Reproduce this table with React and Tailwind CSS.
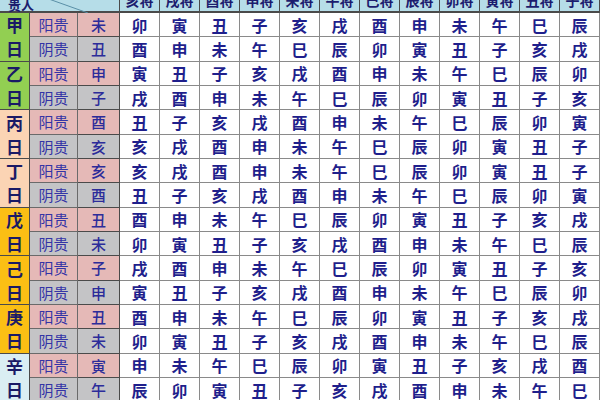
import React from 'react';

const generals = ['亥将', '戌将', '酉将', '申将', '未将', '午将', '巳将', '辰将', '卯将', '寅将', '丑将', '子将'];

const stemBg = {
  green: 'bg-[#92cf52]',
  peach: 'bg-[#fbd4b4]',
  orange: 'bg-[#fbbf14]',
  blue: 'bg-[#daeef3]',
};

const groups = [
  {
    stem: '甲', color: 'green', rows: [
      ['阳贵', '未', '卯寅丑子亥戌酉申未午巳辰'],
      ['阴贵', '丑', '酉申未午巳辰卯寅丑子亥戌'],
    ],
  },
  {
    stem: '乙', color: 'green', rows: [
      ['阳贵', '申', '寅丑子亥戌酉申未午巳辰卯'],
      ['阴贵', '子', '戌酉申未午巳辰卯寅丑子亥'],
    ],
  },
  {
    stem: '丙', color: 'peach', rows: [
      ['阳贵', '酉', '丑子亥戌酉申未午巳辰卯寅'],
      ['阴贵', '亥', '亥戌酉申未午巳辰卯寅丑子'],
    ],
  },
  {
    stem: '丁', color: 'peach', rows: [
      ['阳贵', '亥', '亥戌酉申未午巳辰卯寅丑子'],
      ['阴贵', '酉', '丑子亥戌酉申未午巳辰卯寅'],
    ],
  },
  {
    stem: '戊', color: 'orange', rows: [
      ['阳贵', '丑', '酉申未午巳辰卯寅丑子亥戌'],
      ['阴贵', '未', '卯寅丑子亥戌酉申未午巳辰'],
    ],
  },
  {
    stem: '己', color: 'orange', rows: [
      ['阳贵', '子', '戌酉申未午巳辰卯寅丑子亥'],
      ['阴贵', '申', '寅丑子亥戌酉申未午巳辰卯'],
    ],
  },
  {
    stem: '庚', color: 'orange', rows: [
      ['阳贵', '丑', '酉申未午巳辰卯寅丑子亥戌'],
      ['阴贵', '未', '卯寅丑子亥戌酉申未午巳辰'],
    ],
  },
  {
    stem: '辛', color: 'blue', rows: [
      ['阳贵', '寅', '申未午巳辰卯寅丑子亥戌酉'],
      ['阴贵', '午', '辰卯寅丑子亥戌酉申未午巳'],
    ],
  },
];

function App() {
  return (
    <div
      className="w-[600px] h-[400px] overflow-hidden bg-white"
      style={{ fontFamily: '"Noto Sans CJK SC", "Noto Sans", sans-serif' }}
    >
      <div className="-mt-[11px] grid grid-cols-[30px_48px_42px_repeat(12,40px)] grid-rows-[24px_repeat(16,24.33px)]">
        <div className="col-span-3 relative bg-[#b6dde8] border-b-2 border-r border-[#4a4a4a] flex items-center pl-[8px]">
          <span className="text-[13px] leading-none font-bold text-[#1c1c6e] mt-[8px]">贵人</span>
          <svg className="absolute left-0 top-0" width="120" height="24" viewBox="0 0 120 24">
            <line x1="46" y1="9" x2="88" y2="24" stroke="#5a8fa6" strokeWidth="1" />
          </svg>
        </div>
        {generals.map((g) => (
          <div
            key={g}
            className="bg-[#b6dde8] border-b-2 border-r border-[#4a4a4a] flex items-center justify-center text-[14px] leading-none font-semibold text-[#1c1c6e]"
          >
            {g}
          </div>
        ))}

        {groups.map((grp) => (
          <React.Fragment key={grp.stem}>
            <div
              className={`row-span-2 ${stemBg[grp.color]} border-b border-r border-[#4a4a4a] flex flex-col items-center justify-around text-[17px] leading-none font-bold text-[#1a1a66]`}
            >
              <span>{grp.stem}</span>
              <span>日</span>
            </div>
            {grp.rows.map(([kind, branch, seq], i) => {
              const bg = i === 0 ? 'bg-[#e5b9b7]' : 'bg-[#c4c4c6]';
              return (
                <React.Fragment key={kind}>
                  <div
                    className={`col-start-2 ${bg} border-b border-r border-[#6a6a6a] flex items-center justify-center text-[15px] leading-none text-[#3434a6]`}
                  >
                    {kind}
                  </div>
                  <div
                    className={`${bg} border-b border-r border-[#4a4a4a] flex items-center justify-center text-[15px] leading-none font-medium text-[#2c2c9a]`}
                  >
                    {branch}
                  </div>
                  {seq.split('').map((ch, j) => (
                    <div
                      key={j}
                      className="bg-white border-b border-r border-[#8a8a8a] flex items-center justify-center text-[16px] leading-none font-bold text-[#1f1f8c]"
                    >
                      {ch}
                    </div>
                  ))}
                </React.Fragment>
              );
            })}
          </React.Fragment>
        ))}
      </div>
    </div>
  );
}

export default App;
